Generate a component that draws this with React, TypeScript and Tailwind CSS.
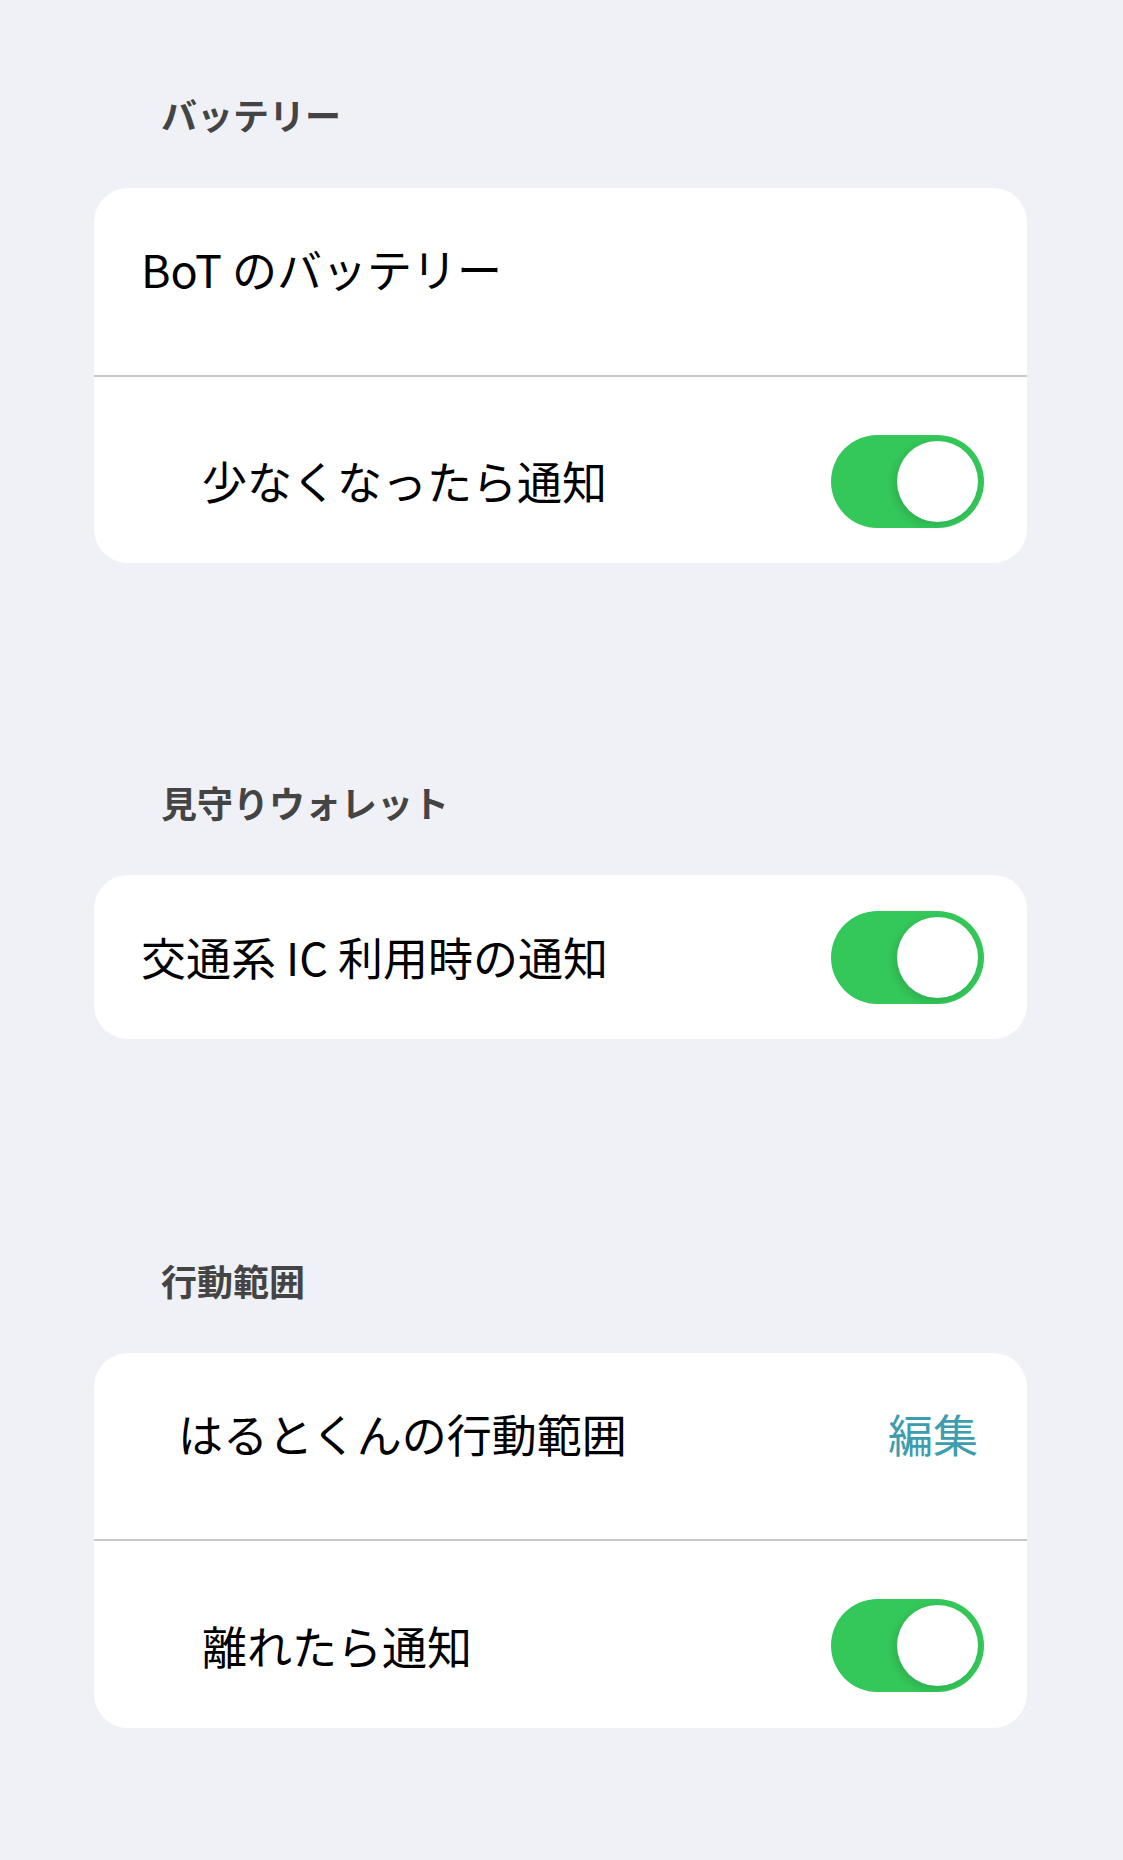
import React, { useState } from 'react';

const font = { fontFamily: '"Noto Sans CJK JP", "Noto Sans", sans-serif' };

const Toggle: React.FC<{ on: boolean; onChange: () => void }> = ({ on, onChange }) => (
  <button
    onClick={onChange}
    className={`w-[153px] h-[93px] rounded-full flex items-center px-[6px] transition-colors ${
      on ? 'bg-[#34c759] justify-end' : 'bg-[#e5e5ea] justify-start'
    }`}
  >
    <span className="block w-[81px] h-[81px] rounded-full bg-white shadow-[-3px_3px_8px_rgba(0,0,0,0.12)]" />
  </button>
);

const SectionHeader: React.FC<{ title: string }> = ({ title }) => (
  <div className="pl-[67px] h-[36px] text-[36px] leading-[36px] font-bold text-[#444444]">{title}</div>
);

const Divider = () => <div className="h-[2px] bg-[#c8c8c8]" />;

const App: React.FC = () => {
  const [battery, setBattery] = useState(true);
  const [wallet, setWallet] = useState(true);
  const [range, setRange] = useState(true);

  return (
    <div className="min-h-[1860px] bg-[#f0f1f6] pl-[94px] pr-[96px] pt-[96px] pb-[100px]" style={font}>
      {/* バッテリー */}
      <SectionHeader title="バッテリー" />
      <div className="mt-[56px] bg-white rounded-[34px] overflow-hidden">
        <div className="h-[187px] pb-[26px] pl-[47px] flex items-center text-[45px] text-black">
          BoT のバッテリー
        </div>
        <Divider />
        <div className="h-[186px] pt-[22px] pl-[108px] pr-[43px] flex items-center justify-between">
          <span className="text-[45px] text-black">少なくなったら通知</span>
          <Toggle on={battery} onChange={() => setBattery(!battery)} />
        </div>
      </div>

      {/* 見守りウォレット */}
      <div className="mt-[221px]">
        <SectionHeader title="見守りウォレット" />
      </div>
      <div className="mt-[55px] bg-white rounded-[34px] overflow-hidden">
        <div className="h-[164px] pl-[47px] pr-[43px] flex items-center justify-between">
          <span className="text-[45px] text-black">交通系 IC 利用時の通知</span>
          <Toggle on={wallet} onChange={() => setWallet(!wallet)} />
        </div>
      </div>

      {/* 行動範囲 */}
      <div className="mt-[223px]">
        <SectionHeader title="行動範囲" />
      </div>
      <div className="mt-[55px] bg-white rounded-[34px] overflow-hidden">
        <div className="h-[186px] pb-[24px] pl-[84px] pr-[49px] flex items-center justify-between">
          <span className="text-[45px] text-black">はるとくんの行動範囲</span>
          <button className="text-[45px] text-[#3d9dae]">編集</button>
        </div>
        <Divider />
        <div className="h-[187px] pt-[22px] pl-[108px] pr-[43px] flex items-center justify-between">
          <span className="text-[45px] text-black">離れたら通知</span>
          <Toggle on={range} onChange={() => setRange(!range)} />
        </div>
      </div>
    </div>
  );
};

export default App;
